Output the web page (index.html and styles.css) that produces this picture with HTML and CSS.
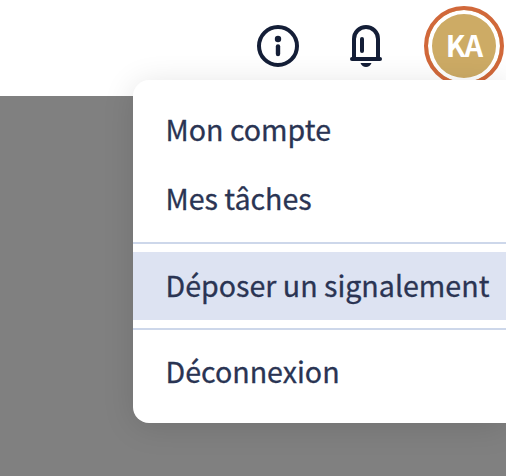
FILE: index.html
```html
<!DOCTYPE html>
<html lang="fr">
<head>
  <meta charset="UTF-8">
  <meta name="viewport" content="width=device-width, initial-scale=1.0">
  <title>Mon espace</title>
  <link rel="stylesheet" href="styles.css">
</head>
<body>
  <header class="topbar">
    <button class="icon-button" aria-label="Informations">
      <svg width="48" height="48" viewBox="0 0 48 48" fill="none">
        <circle cx="24" cy="24" r="19" stroke="currentColor" stroke-width="4"/>
        <circle cx="24" cy="17" r="3.2" fill="currentColor"/>
        <path d="M24 24.5v7.5" stroke="currentColor" stroke-width="4.4" stroke-linecap="round"/>
      </svg>
    </button>
    <button class="icon-button" aria-label="Notifications">
      <svg width="48" height="48" viewBox="0 0 48 48" fill="none" stroke="currentColor" stroke-width="4" stroke-linecap="round">
        <path d="M12 37V17a12 12 0 0 1 24 0v20"/>
        <path d="M10 37h28"/>
        <path d="M20 17v12"/>
        <path d="M18.5 41h11c-1 2.6-3 4-5.5 4s-4.5-1.4-5.5-4z" fill="currentColor" stroke="none"/>
      </svg>
    </button>
    <div class="profile">
      <button class="avatar">KA</button>
      <nav class="menu">
        <a class="menu-item" href="#">Mon compte</a>
        <a class="menu-item" href="#">Mes tâches</a>
        <hr class="menu-divider">
        <a class="menu-item active" href="#">Déposer un signalement</a>
        <hr class="menu-divider">
        <a class="menu-item" href="#">Déconnexion</a>
      </nav>
    </div>
  </header>
</body>
</html>
```

FILE: styles.css
```css
* {
  margin: 0;
  padding: 0;
  box-sizing: border-box;
}

body {
  font-family: "Noto Sans CJK SC", "Noto Sans", sans-serif;
  background: #808080;
  color: #2a3453;
  height: 100vh;
  overflow: hidden;
}

button {
  border: none;
  background: none;
  font-family: inherit;
}

.topbar {
  display: flex;
  justify-content: flex-end;
  align-items: center;
  gap: 40px;
  height: 96px;
  padding: 0 2px 4px 0;
  background: #fff;
}

.icon-button {
  display: flex;
  width: 48px;
  height: 48px;
  color: #141e37;
}

.profile {
  position: relative;
  margin-left: -6px;
}

.avatar {
  display: block;
  width: 80px;
  height: 80px;
  border: 4px solid #d1683a;
  border-radius: 50%;
  box-shadow: inset 0 0 0 4px #fff;
  background: #cdab65;
  color: #fff;
  font-size: 29px;
  font-weight: 700;
  letter-spacing: -0.8px;
  line-height: 68px;
  padding-bottom: 4px;
  text-align: center;
}

.menu {
  position: absolute;
  top: 74px;
  right: -2px;
  width: 373px;
  padding: 16px 0;
  background: #fff;
  border-radius: 16px 0 0 16px;
  box-shadow: 0 4px 32px rgba(0, 0, 0, 0.12);
}

.menu-item {
  display: block;
  height: 69px;
  padding-left: 32.5px;
  color: inherit;
  font-size: 28.6px;
  line-height: 65px;
  text-decoration: none;
  white-space: nowrap;
  -webkit-text-stroke: 0.3px currentColor;
}

.menu-item.active {
  height: 68px;
  background: #dde3f2;
}

.menu-divider {
  height: 2px;
  margin: 8px 0;
  border: none;
  background: #cdd7ea;
}
```
